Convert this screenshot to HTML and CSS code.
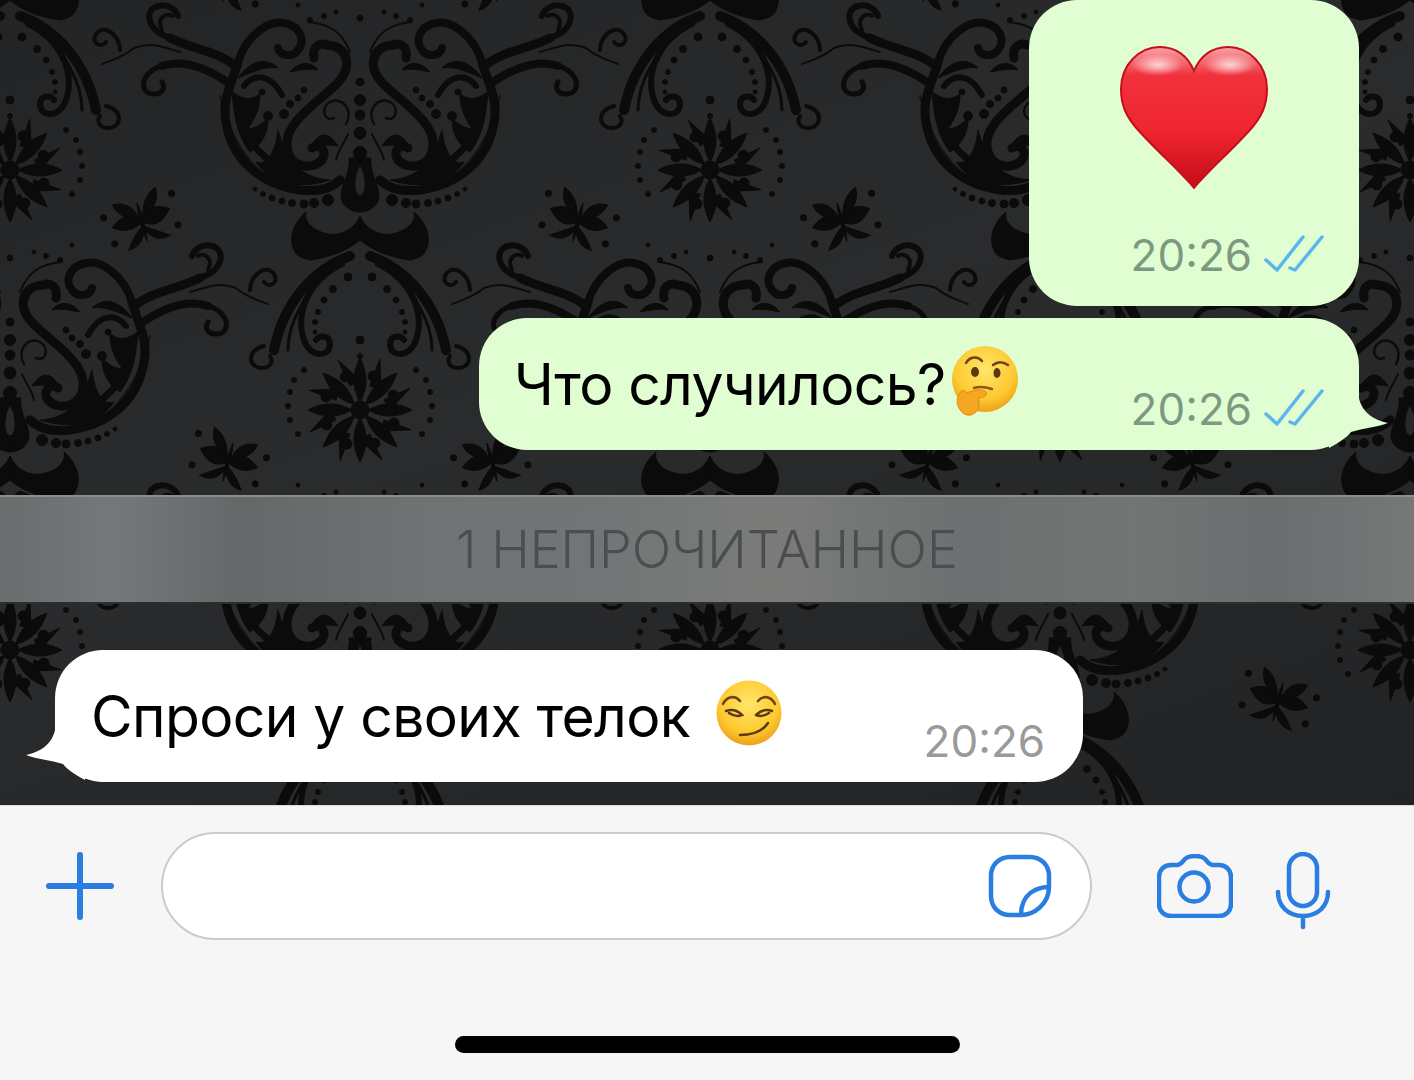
FILE: index.html
```html
<!DOCTYPE html>
<html lang="ru">
<head>
  <meta charset="UTF-8">
  <meta name="viewport" content="width=device-width, initial-scale=1.0">
  <title>Чат</title>
  <link rel="stylesheet" href="styles.css">
</head>
<body>
  <main class="chat">
    <!-- wallpaper: one damask unit repeated as a half-drop -->
    <svg class="wallpaper" width="1414" height="805" viewBox="0 0 1414 805" aria-hidden="true">
      <defs>
        <g id="petal"><path d="M0,-8 C9,-24 7,-38 0,-52 C-7,-38 -9,-24 0,-8Z"/><circle cx="-13" cy="-34" r="5"/><circle cx="13" cy="-34" r="5"/><path d="M0,-30 L-22,-50 L-10,-24Z"/></g>
        <g id="sprig">
          <path d="M0,20 C-2,8 -3,-4 0,-20 C3,-4 2,8 0,20Z"/>
          <path d="M-30,-2 C-15,-14 -6,-10 0,0 C-10,6 -20,6 -30,-2Z"/><path d="M30,-6 C15,-16 6,-10 0,0 C10,8 20,6 30,-6Z"/>
          <path d="M-24,-24 C-10,-24 -4,-14 -2,-4 C-12,-6 -22,-12 -24,-24Z"/><path d="M22,-30 C10,-26 4,-14 2,-4 C12,-8 22,-16 22,-30Z"/>
          <path d="M-20,24 C-12,12 -6,8 0,4 C0,14 -8,24 -20,24Z"/><path d="M24,20 C12,12 6,8 0,4 C2,14 10,24 24,20Z"/>
          <circle cx="-36" cy="-14" r="3"/><circle cx="36" cy="-20" r="3"/><circle cx="-32" cy="14" r="3"/><circle cx="34" cy="12" r="3"/>
        </g>
        <g id="half">
          <g fill="none" stroke-linecap="round">
            <!-- basin and top loop -->
            <path stroke-width="8" d="M-122,-38 C-114,-64 -92,-80 -76,-77 C-60,-74 -54,-60 -62,-50 C-68,-42 -80,-44 -82,-52"/>
            <path stroke-width="9" d="M-122,-38 C-128,-16 -140,2 -133,27 C-126,60 -100,84 -60,90 C-42,92 -28,88 -20,80"/>
            <!-- S curve -->
            <path stroke-width="9" d="M-46,-42 C-48,-54 -40,-58 -33,-55 C-12,-54 -8,-34 -20,-20 C-34,-2 -76,20 -73,46 C-72,66 -50,72 -38,60 C-32,52 -40,42 -48,48"/>
            <!-- arms -->
            <path stroke-width="9" d="M-124,-34 C-145,-50 -165,-50 -190,-62"/>
            <path stroke-width="6" d="M-190,-62 C-214,-70 -216,-90 -202,-94 C-192,-97 -184,-90 -182,-84"/>
            <path stroke-width="4" d="M-198,-70 C-204,-82 -194,-88 -188,-84"/>
            <path stroke-width="8" d="M-130,-16 C-150,-30 -175,-42 -198,-34"/>
            <path stroke-width="5" d="M-198,-34 C-220,-28 -222,-6 -206,-6 C-198,-6 -194,-12 -198,-18"/>
            <path stroke-width="2" d="M-226,-52 C-238,-42 -248,-40 -258,-36 M-226,-52 C-210,-58 -200,-54 -180,-48"/>
            <path stroke-width="4" d="M-240,-50 C-240,-66 -258,-78 -265,-64 C-268,-56 -258,-52 -254,-58"/>
            <path stroke-width="2" stroke-opacity=".7" d="M-140,-4 C-132,30 -118,58 -92,78"/>
            <!-- thin loops near the axis -->
            <path stroke-width="2.5" d="M-14,24 C-6,10 -18,-4 -30,2 C-40,8 -36,22 -26,18"/>
            <path stroke-width="2" d="M-12,34 C-16,44 -22,50 -24,60"/>
            <!-- inner scroll at the base -->
            <path stroke-width="7" d="M-122,10 C-116,36 -100,64 -62,72"/>
            <path stroke-width="6" d="M-78,-5 C-92,-30 -108,-24 -116,-14"/>
            <!-- arch below -->
            <path stroke-width="10" d="M-10,156 C-44,168 -76,200 -86,250"/>
            <path stroke-width="6" d="M-18,164 C-48,178 -66,210 -56,240 C-50,258 -30,258 -30,244 C-30,236 -40,234 -44,240"/>
            <path stroke-width="3" d="M-30,172 C-52,190 -72,220 -72,250"/>
            <path stroke-width="4" d="M-96,246 C-114,250 -112,268 -98,268 C-90,268 -86,262 -90,256"/>
          </g>
          <!-- leaves inside the basin -->
          <path d="M-128,-8 C-118,-2 -112,2 -100,-6 C-100,6 -104,18 -112,28 C-106,30 -98,24 -92,18 C-92,34 -98,44 -110,52 C-124,34 -126,12 -128,-8Z"/>
          <path d="M-122,-22 C-108,-42 -92,-42 -82,-32 C-92,-34 -104,-30 -122,-22Z"/>
          <path d="M-70,-28 C-60,-40 -48,-38 -42,-30 C-50,-32 -60,-30 -70,-28Z"/>
          <path d="M-48,44 C-38,30 -30,34 -22,46 C-30,44 -40,46 -48,44Z"/>
          <path d="M-104,62 C-92,66 -84,50 -82,30 C-74,60 -60,78 -30,80 C-60,90 -90,84 -104,62Z"/>
          <circle cx="-92" cy="16" r="4.5"/><circle cx="-76" cy="14" r="4.5"/><circle cx="-70" cy="4" r="3.5"/><circle cx="-62" cy="-2" r="3"/><circle cx="-56" cy="-10" r="3"/><circle cx="-98" cy="-8" r="3"/>
          <!-- bottom row of dots -->
          <circle cx="-105" cy="89" r="2"/><circle cx="-97" cy="94" r="2.5"/><circle cx="-88" cy="98" r="3"/><circle cx="-78" cy="101" r="3"/><circle cx="-68" cy="103" r="3.5"/><circle cx="-56" cy="104" r="4"/><circle cx="-46" cy="103" r="4.5"/><circle cx="-32" cy="100" r="5.5"/>
          <circle cx="-50" cy="-80" r="2.5"/><circle cx="-36" cy="-84" r="2.5"/><circle cx="-24" cy="-88" r="2"/><circle cx="-62" cy="-95" r="2"/>
          <path fill="none" stroke-width="2" d="M-10,-48 C-18,-68 -30,-76 -52,-78" stroke-linecap="round"/>
          <!-- moustache -->
          <path d="M0,116 C-6,130 -20,136 -32,134 C-50,130 -56,120 -54,112 C-66,122 -72,138 -66,150 C-64,156 -58,158 -50,160 C-34,158 -14,152 0,140Z"/>
          <!-- dots under the moustache -->
          <circle cx="-12" cy="177" r="4"/><circle cx="-27" cy="189" r="3.5"/><circle cx="-36" cy="200" r="3"/><circle cx="-42" cy="212" r="2.5"/><circle cx="-45" cy="222" r="2.5"/><circle cx="-45" cy="232" r="2"/>
          <!-- keyhole side -->
          <path d="M0,56 C-4,58 -8,58 -11,58 C-9,72 -19,84 -19,96 C-19,106 -8,112 0,112 L0,96 C-6,94 -6,84 -4,74 C-2,68 0,66 0,64Z"/>
          <!-- dot ring round the flower -->
          <circle cx="-70" cy="292" r="2.5"/><circle cx="-66" cy="280" r="2.5"/><circle cx="-56" cy="270" r="2.5"/><circle cx="-72" cy="306" r="2.5"/><circle cx="-70" cy="320" r="2.5"/><circle cx="-62" cy="334" r="2.5"/>
          <use href="#sprig" transform="translate(-218,122) rotate(-15)"/>
        </g>
        <g id="damask">
          <use href="#half"/>
          <use href="#half" transform="scale(-1,1)"/>
          <circle cx="0" cy="0" r="5.5"/><circle cx="0" cy="15" r="5"/><circle cx="0" cy="33" r="6"/><circle cx="0" cy="53" r="6.5"/><circle cx="0" cy="-18" r="4"/><circle cx="0" cy="-82" r="3"/>
          <circle cx="0" cy="240" r="4"/><circle cx="0" cy="256" r="2.5"/>
          <g transform="translate(0,310)">
            <use href="#petal"/>
            <use href="#petal" transform="rotate(45)"/><use href="#petal" transform="rotate(90)"/><use href="#petal" transform="rotate(135)"/>
            <use href="#petal" transform="rotate(180)"/><use href="#petal" transform="rotate(225)"/><use href="#petal" transform="rotate(270)"/><use href="#petal" transform="rotate(315)"/>
            <circle r="9"/>
          </g>
        </g>
      </defs>
      <g fill="#0b0b0c" stroke="#0b0b0c">
        <use href="#damask" x="360" y="-380"/><use href="#damask" x="1060" y="-380"/>
        <use href="#damask" x="10" y="-140"/><use href="#damask" x="710" y="-140"/><use href="#damask" x="1410" y="-140"/>
        <use href="#damask" x="360" y="100"/><use href="#damask" x="1060" y="100"/>
        <use href="#damask" x="10" y="340"/><use href="#damask" x="710" y="340"/><use href="#damask" x="1410" y="340"/>
        <use href="#damask" x="360" y="580"/><use href="#damask" x="1060" y="580"/>
      </g>
    </svg>

    <div class="bubble bubble-out bubble-heart">
      <svg class="heart" width="148" height="144" viewBox="0 0 148 144" aria-hidden="true">
        <defs>
          <linearGradient id="heartFill" x1="0" y1="0" x2="0" y2="1">
            <stop offset="0" stop-color="#f9a3a8"/>
            <stop offset=".2" stop-color="#f0323c"/>
            <stop offset=".6" stop-color="#ef2530"/>
            <stop offset="1" stop-color="#c20d18"/>
          </linearGradient>
          <radialGradient id="shine" cx=".5" cy=".5" r=".5">
            <stop offset="0" stop-color="#fff" stop-opacity=".75"/>
            <stop offset="1" stop-color="#fff" stop-opacity="0"/>
          </radialGradient>
        </defs>
        <path d="M74,143 C62,128 36,105 19,86 C6,72 1,60 1,44 C1,20 19,2 40,2 C56,2 68,11 74,26 C80,11 92,2 108,2 C129,2 147,20 147,44 C147,60 142,72 129,86 C112,105 86,128 74,143Z" fill="url(#heartFill)" stroke="#c50f1a" stroke-width="2"/>
        <ellipse cx="38" cy="20" rx="26" ry="11" fill="url(#shine)"/>
        <ellipse cx="110" cy="20" rx="26" ry="11" fill="url(#shine)"/>
      </svg>
      <div class="meta">
        <span class="time">20:26</span>
        <svg class="ticks" width="60" height="40" viewBox="0 0 60 40" aria-hidden="true"><path d="M2,26 L13,36 L39,3 M26,34 L31,36 L58,3" fill="none" stroke="#5cb5ec" stroke-width="3.5" stroke-linecap="round" stroke-linejoin="round"/></svg>
      </div>
    </div>

    <div class="bubble bubble-out bubble-text">
      <span class="msg">Что случилось?</span>
      <svg class="emoji" width="70" height="70" viewBox="0 0 70 70" aria-hidden="true">
        <defs>
          <radialGradient id="faceFill" cx=".5" cy=".35" r=".7">
            <stop offset="0" stop-color="#ffe66b"/>
            <stop offset=".65" stop-color="#fdc92f"/>
            <stop offset="1" stop-color="#ec9415"/>
          </radialGradient>
        </defs>
        <circle cx="37" cy="33" r="33" fill="url(#faceFill)"/>
        <path d="M18,17 C22,10 30,10 34,15 M45,19 C50,15 56,16 60,19" fill="none" stroke="#6b4514" stroke-width="2.5" stroke-linecap="round"/>
        <ellipse cx="27" cy="26" rx="4" ry="5" fill="#5b3a12"/>
        <ellipse cx="49" cy="27" rx="3.5" ry="5" fill="#5b3a12"/>
        <path d="M26,42 C32,40 38,41 44,43" fill="none" stroke="#8a5a16" stroke-width="2.5" stroke-linecap="round"/>
        <path d="M15,67 C9,62 7,54 12,47 C14,43 18,44 18,47 L28,44 C36,43 40,46 38,49 C37,51 33,52 30,52 C32,56 31,62 28,66 C24,70 19,70 15,67Z" fill="#f5a623" stroke="#e08a15" stroke-width="1"/>
      </svg>
      <div class="meta">
        <span class="time">20:26</span>
        <svg class="ticks" width="60" height="40" viewBox="0 0 60 40" aria-hidden="true"><path d="M2,26 L13,36 L39,3 M26,34 L31,36 L58,3" fill="none" stroke="#5cb5ec" stroke-width="3.5" stroke-linecap="round" stroke-linejoin="round"/></svg>
      </div>
      <svg class="tail tail-out" width="60" height="60" viewBox="0 0 60 60" aria-hidden="true"><path d="M29,0 C29,15 36,29 59,34 C50,38 34,39 22,43 C18,48 10,54 0,59 L0,0Z"/></svg>
    </div>

    <div class="unread"><span>1 НЕПРОЧИТАННОЕ</span></div>

    <div class="bubble bubble-in bubble-text">
      <span class="msg">Спроси у своих телок</span>
      <svg class="emoji emoji-smirk" width="66" height="66" viewBox="0 0 66 66" aria-hidden="true">
        <circle cx="33" cy="33" r="32.5" fill="url(#faceFill)"/>
        <path d="M7,24 C11,16 19,15 24,21 M42,21 C47,15 55,16 59,24" fill="none" stroke="#6b4514" stroke-width="2.5" stroke-linecap="round"/>
        <path d="M10,31 C16,29 22,31 26,35 C21,37 16,35 13,33 M40,35 C44,31 50,29 56,31 M53,33 C50,35 45,37 40,35" fill="none" stroke="#5b3a12" stroke-width="2.5" stroke-linecap="round"/>
        <path d="M24,55 C36,55 46,52 52,43" fill="none" stroke="#5b3a12" stroke-width="2.5" stroke-linecap="round"/>
      </svg>
      <div class="meta"><span class="time time-in">20:26</span></div>
      <svg class="tail tail-in" width="60" height="60" viewBox="0 0 60 60" aria-hidden="true"><path d="M29,0 C29,15 36,29 59,34 C50,38 34,39 22,43 C18,48 10,54 0,59 L0,0Z"/></svg>
    </div>
  </main>

  <footer class="bar">
    <div class="bar-row">
      <svg class="icon-plus" width="70" height="70" viewBox="0 0 70 70" aria-hidden="true"><path d="M35,4 V66 M4,35 H66" fill="none" stroke="#2a7de1" stroke-width="6" stroke-linecap="round"/></svg>
      <div class="input">
        <svg width="64" height="64" viewBox="0 0 64 64" aria-hidden="true"><path d="M22,3 H42 C53,3 61,11 61,22 V33 C61,50 46,61 33,61 H22 C11,61 3,53 3,42 V22 C3,11 11,3 22,3Z M61,33 C48,33 33,40 33,61" fill="none" stroke="#2a7de1" stroke-width="4.5" stroke-linejoin="round"/></svg>
      </div>
      <svg class="icon-camera" width="76" height="64" viewBox="0 0 76 64" aria-hidden="true"><path d="M14,11 H20 C24,11 25,8 28,5 C30,3 33,2 38,2 C43,2 46,3 48,5 C51,8 52,11 56,11 H62 C69,11 74,16 74,23 V50 C74,57 69,62 62,62 H14 C7,62 2,57 2,50 V23 C2,16 7,11 14,11Z" fill="none" stroke="#2a7de1" stroke-width="4.5"/><circle cx="37" cy="33" r="14.5" fill="none" stroke="#2a7de1" stroke-width="4.5"/></svg>
      <svg class="icon-mic" width="56" height="78" viewBox="0 0 56 78" aria-hidden="true"><rect x="14" y="2" width="28" height="52" rx="14" fill="none" stroke="#2a7de1" stroke-width="4.5"/><path d="M3,40 C3,54 13,64 28,64 C43,64 53,54 53,40 M28,64 V75" fill="none" stroke="#2a7de1" stroke-width="4.5" stroke-linecap="round"/></svg>
    </div>
    <div class="home-indicator"></div>
  </footer>
</body>
</html>
```

FILE: styles.css
```css
* {
  box-sizing: border-box;
}
body {
  margin: 0;
  width: 1414px;
  height: 1080px;
  overflow: hidden;
  font-family: Inter, "Liberation Sans", sans-serif;
  color: #000;
  background-color: #f6f6f6;
}

/* chat area */
.chat {
  position: relative;
  height: 805px;
  display: flex;
  flex-direction: column;
  overflow: hidden;
  background: linear-gradient(160deg, #232425 0%, #2a2b2c 45%, #222324 100%);
}
.wallpaper {
  position: absolute;
  top: 0;
  left: 0;
  filter: blur(0.7px);
}
.bubble {
  position: relative;
  display: flex;
  border-radius: 48px;
}
.bubble-out {
  align-self: flex-end;
  margin-right: 55px;
  background-color: #e1fed3;
}
.bubble-in {
  align-self: flex-start;
  margin-left: 55px;
  margin-top: 46px;
  background-color: #fff;
}
.bubble-heart {
  width: 330px;
  height: 306px;
  flex-direction: column;
  align-items: center;
  padding-top: 45px;
}
.bubble-heart .meta {
  position: absolute;
  right: 35px;
  bottom: 24px;
}
.bubble-text {
  height: 132px;
  align-items: center;
  padding-left: 35px;
  padding-right: 35px;
}
.bubble-out.bubble-text {
  width: 880px;
  margin-top: 12px;
}
.bubble-in.bubble-text {
  width: 1028px;
  padding-left: 36px;
  padding-right: 38px;
}
.msg {
  font-size: 57px;
  letter-spacing: -0.6px;
  white-space: nowrap;
}
.emoji {
  flex: none;
  margin-bottom: 6px;
  margin-left: 2px;
}
.emoji-smirk {
  margin-left: 26px;
}
.meta {
  display: flex;
  align-items: center;
  margin-left: auto;
  margin-top: 50px;
}
.bubble-heart .meta {
  margin: 0;
}
.time {
  font-size: 44px;
  color: #7d9a81;
  white-space: nowrap;
}
.time-in {
  color: #9a9a9a;
}
.ticks {
  margin-left: 12px;
  margin-bottom: 2px;
}
.tail {
  position: absolute;
  bottom: 1px;
  fill: #e1fed3;
}
.tail-out {
  right: -30px;
}
.tail-in {
  left: -30px;
  transform: scaleX(-1);
  fill: #fff;
}

/* unread strip */
.unread {
  position: relative;
  height: 109px;
  margin-top: 45px;
  display: flex;
  align-items: center;
  justify-content: center;
  border-top: 2px solid #8b8d8d;
  border-bottom: 2px solid #2c2e2e;
  background: linear-gradient(90deg, #6a6d6e 0%, #74787a 8%, #646869 17%, #6f7373 30%, #717575 42%, #7b7c7a 55%, #6c7070 68%, #717574 80%, #6a6e6f 90%, #757877 100%);
}
.unread span {
  font-size: 52px;
  font-weight: 300;
  color: #4a4e51;
  white-space: nowrap;
}

/* input bar */
.bar {
  height: 275px;
  display: flex;
  flex-direction: column;
  border-top: 1px solid #dcdcdc;
  background-color: #f6f6f6;
}
.bar-row {
  display: flex;
  align-items: center;
  padding-top: 26px;
  padding-left: 45px;
}
.input {
  width: 931px;
  height: 108px;
  margin-left: 46px;
  padding-right: 38px;
  display: flex;
  align-items: center;
  justify-content: flex-end;
  background-color: #fff;
  border: 2px solid #cbcbcb;
  border-radius: 54px;
}
.icon-camera {
  margin-left: 65px;
}
.icon-mic {
  margin-left: 42px;
  margin-top: 10px;
}
.home-indicator {
  width: 505px;
  height: 17px;
  margin: auto auto 27px 455px;
  background-color: #000;
  border-radius: 9px;
}
```
